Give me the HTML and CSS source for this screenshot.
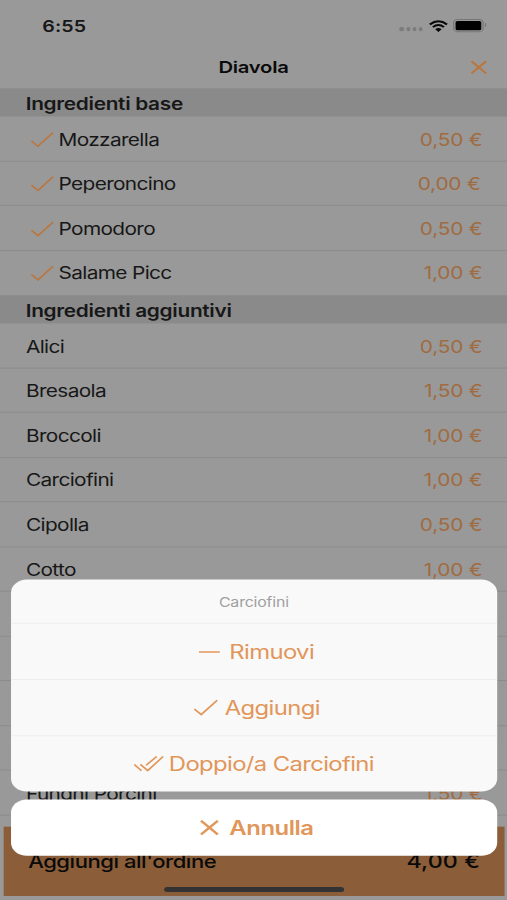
FILE: index.html
```html
<!DOCTYPE html>
<html lang="it">
<head>
<meta charset="utf-8">
<title>Diavola</title>
<link rel="stylesheet" href="styles.css">
</head>
<body>
<svg width="0" height="0" class="defs">
  <symbol id="check" viewBox="0 0 19 16"><path d="M.6 9.3 6 14.6 18.4 1"/></symbol>
  <symbol id="cross" viewBox="0 0 14 14"><path d="M1 1 13 13M13 1 1 13"/></symbol>
  <symbol id="double" viewBox="0 0 25 17"><path d="M.6 9 6.6 15.4M5.6 9 11.6 15.2 24.2 1.2M10.3 9.8 19 1.2"/></symbol>
</svg>
<div class="screen">
  <div class="status">
    <span class="time">6:55</span>
    <span class="signal"><i></i><i></i><i></i><i></i></span>
    <svg class="wifi" viewBox="0 0 16 12"><path d="M1 4.3Q8-2 15 4.3M3.5 7Q8 2.9 12.5 7"/><path class="solid" d="M5.4 9Q8 6.9 10.6 9L8 11.8Z"/></svg>
    <span class="battery"><i></i></span>
  </div>
  <div class="nav"><h1>Diavola</h1><svg class="close"><use href="#cross"/></svg></div>
  <h2>Ingredienti base</h2>
  <div class="row checked"><svg><use href="#check"/></svg><span>Mozzarella</span><b>0,50 €</b></div>
  <div class="row checked"><svg><use href="#check"/></svg><span>Peperoncino</span><b class="free">0,00 €</b></div>
  <div class="row checked"><svg><use href="#check"/></svg><span>Pomodoro</span><b>0,50 €</b></div>
  <div class="row checked last"><svg><use href="#check"/></svg><span>Salame Picc</span><b>1,00 €</b></div>
  <h2>Ingredienti aggiuntivi</h2>
  <div class="row"><span>Alici</span><b>0,50 €</b></div>
  <div class="row"><span>Bresaola</span><b>1,50 €</b></div>
  <div class="row"><span>Broccoli</span><b>1,00 €</b></div>
  <div class="row"><span>Carciofini</span><b>1,00 €</b></div>
  <div class="row"><span>Cipolla</span><b>0,50 €</b></div>
  <div class="row"><span>Cotto</span><b>1,00 €</b></div>
  <div class="row"></div>
  <div class="row"></div>
  <div class="row"></div>
  <div class="row"></div>
  <div class="row"><span>Funghi Porcini</span><b>1,50 €</b></div>
  <div class="order"><span>Aggiungi all'ordine</span><span class="total">4,00 €</span></div>
  <div class="home"></div>
  <div class="sheet">
    <div class="group">
      <div class="title">Carciofini</div>
      <div class="action"><svg class="minus" viewBox="0 0 18 4"><path d="M.5 2H17.5"/></svg><span>Rimuovi</span></div>
      <div class="action add"><svg class="tick"><use href="#check"/></svg><span>Aggiungi</span></div>
      <div class="action double"><svg class="ticks"><use href="#double"/></svg><span>Doppio/a Carciofini</span></div>
    </div>
    <div class="cancel"><svg><use href="#cross"/></svg><span>Annulla</span></div>
  </div>
</div>
</body>
</html>
```
FILE: styles.css
```css
* { box-sizing: border-box; }
html, body { margin: 0; overflow: hidden; }
body { width: 507px; height: 900px; background: #999; font-family: Inter, sans-serif; }
.defs { position: absolute; }
svg { fill: none; stroke: currentColor; stroke-width: 1.5; flex: none; }

/* 414x896 point screen stretched over the window */
.screen {
  position: relative; width: 414px; height: 896px; overflow: hidden;
  transform: scale(1.22464, 1.00446); transform-origin: 0 0;
  background: #999; color: #171717; font-size: 17px;
}
.status { height: 44px; padding: 7px 16.5px 0 34.5px; display: flex; align-items: center; }
.time { font-size: 16px; font-weight: 600; letter-spacing: .1px; margin-right: auto; }
.signal { display: flex; gap: 2px; margin: 7px 4.3px 0 0; }
.signal i { width: 3.2px; height: 4px; border-radius: 50%; background: #7c7c7c; }
.wifi { width: 16px; height: 12px; color: #080808; stroke-width: 2; margin-right: 4.6px; }
.wifi .solid { fill: currentColor; stroke: none; }
.battery { width: 24.4px; height: 12.6px; padding: 1px; border: 1.5px solid #777; border-radius: 3.5px; position: relative; margin-right: 3px; }
.battery i { display: block; height: 100%; background: #000; border-radius: 1.5px; }
.battery::after { content: ""; position: absolute; right: -3.5px; top: 3px; width: 1.5px; height: 4px; background: #777; border-radius: 0 2px 2px 0; }
.nav { height: 44px; display: flex; align-items: center; justify-content: center; position: relative; }
h1 { margin: 2px 0 0; font-size: 16.5px; font-weight: 600; color: #0a0a0a; letter-spacing: -.2px; }
.close { position: absolute; right: 16.2px; top: 15.5px; width: 14px; height: 14px; color: #b9773f; stroke-width: 1.9; }
h2 { margin: 0; height: 28px; padding: 2px 21px 0; background: #8a8a8a; font-size: 17px; line-height: 28px; font-weight: 600; letter-spacing: -.25px; }
.row { height: 44.5px; padding: 1.6px 20px 0 21.2px; display: flex; align-items: center; border-bottom: 1px solid #8c8c8c; letter-spacing: -.52px; }
.row.last { border-color: transparent; }
.row b { margin-left: auto; font-weight: 400; color: #a06b40; letter-spacing: -.15px; }
.row .free { margin-right: 1.5px; }
.row svg { width: 19px; height: 16px; margin: 0 3.7px 0 3.9px; color: #b9773f; }
.order { position: absolute; left: 3px; right: 2px; top: 822.5px; height: 69px; padding: 0 20px; display: flex; justify-content: space-between; align-items: center; background: #8b5e39; color: #0a0a0a; font-size: 18px; font-weight: 500; letter-spacing: -.38px; }
.total { font-size: 19px; letter-spacing: .1px; }
.home { position: absolute; left: 133.5px; top: 883px; width: 147.3px; height: 5px; border-radius: 3px; background: #333; }
.sheet { position: absolute; left: 8.7px; right: 8px; top: 576.5px; color: #e1965a; font-size: 19.5px; }
.group { border-radius: 13px; background: #f9f9f9; overflow: hidden; }
.title { height: 43.5px; padding-top: 1px; display: flex; align-items: center; justify-content: center; color: #a0a0a0; font-size: 13px; letter-spacing: -.15px; }
.action { height: 56px; border-top: 1px solid #eee; display: flex; align-items: center; justify-content: center; letter-spacing: -.53px; padding-left: 4px; }
.action.double { padding-left: 0; }
.minus { width: 18px; height: 4px; margin-right: 7px; }
.tick { width: 20px; height: 17px; margin-right: 6px; }
.ticks { width: 25px; height: 17px; margin-right: 3.5px; }
.cancel { margin-top: 8px; height: 56.2px; border-radius: 13px; background: #fff; display: flex; align-items: center; justify-content: center; font-weight: 600; letter-spacing: -.4px; padding-left: 4px; }
.cancel svg { width: 16px; height: 16px; margin-right: 8.5px; stroke-width: 2; }
.cancel use, .close use { transform-origin: 0 0; }
```
